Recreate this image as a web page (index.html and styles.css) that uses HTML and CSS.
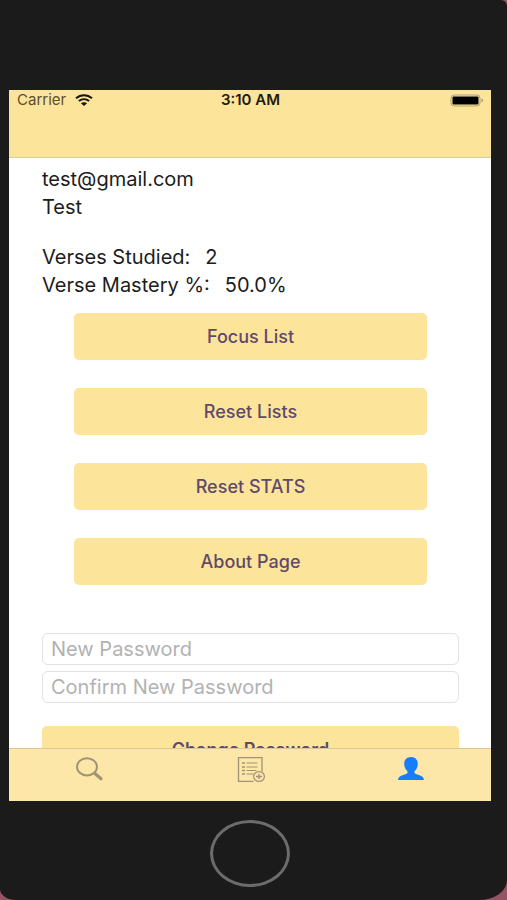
FILE: index.html
```html
<!DOCTYPE html>
<html lang="en">
<head>
<meta charset="utf-8">
<meta name="viewport" content="width=device-width, initial-scale=1">
<title>Profile</title>
<link rel="stylesheet" href="styles.css">
</head>
<body>
<div class="device">
  <div class="screen">
    <header class="topbar">
      <div class="status">
        <div class="carrier">
          <span>Carrier</span>
          <svg class="wifi" viewBox="0 0 18 12" aria-hidden="true">
            <path d="M1 4.3C5.6.1 12.4.1 17 4.3" />
            <path d="M3.9 7.1c3-2.6 7.2-2.6 10.2 0" />
            <path class="solid" d="M9 12 5.9 9.3c1.8-1.5 4.4-1.5 6.2 0z" />
          </svg>
        </div>
        <span class="time">3:10 AM</span>
        <svg class="battery" viewBox="0 0 34 13" aria-hidden="true">
          <rect class="shell" x="1" y="1" width="29" height="11" rx="3" />
          <rect x="2.500" y="2.500" width="26" height="8" rx="1" />
          <path class="cap" d="M31.500 4.500c2 .8 2 3.200 0 4z" />
        </svg>
      </div>
    </header>
    <main class="content">
      <div class="account">
        <p>test@gmail.com</p>
        <p>Test</p>
      </div>
      <dl class="stats">
        <div><dt>Verses Studied:</dt><dd>2</dd></div>
        <div><dt>Verse Mastery %:</dt><dd>50.0%</dd></div>
      </dl>
      <div class="actions">
        <button class="btn" type="button">Focus List</button>
        <button class="btn" type="button">Reset Lists</button>
        <button class="btn" type="button">Reset STATS</button>
        <button class="btn" type="button">About Page</button>
      </div>
      <form class="password">
        <input type="password" placeholder="New Password" aria-label="New Password" autocomplete="new-password">
        <input type="password" placeholder="Confirm New Password" aria-label="Confirm New Password" autocomplete="new-password">
        <button class="btn strong" type="button">Change Password</button>
      </form>
    </main>
    <nav class="tabs">
      <a href="#search" aria-label="Search">
        <svg class="icon" viewBox="0 0 30 26" aria-hidden="true">
          <ellipse cx="13" cy="10.800" rx="10" ry="8.600" stroke-width="2" />
          <path d="m19.500 16.500 2.500 2" stroke-width="2" />
          <path d="m21.500 18 5.500 4.700" stroke-width="3.200" stroke-linecap="round" />
        </svg>
      </a>
      <a href="#lists" aria-label="Lists">
        <svg class="icon" viewBox="0 0 30 26" aria-hidden="true">
          <path d="M18.500 25.300H3.500V1.700H27v14" stroke-width="1.300" />
          <path d="M7 7h3M7 11h3M7 14.500h3M7 18h3" stroke-width="1.500" />
          <path d="M11.500 7h11M11.500 11h11M11.500 14.500h10M11.500 18h7" stroke-width="1.200" />
          <ellipse cx="24" cy="20.500" rx="5.400" ry="4.900" stroke-width="1.200" />
          <path d="M21 20.500h6M24 18v5" stroke-width="1.300" />
        </svg>
      </a>
      <a class="active" href="#profile" aria-label="Profile" aria-current="page">
        <svg class="icon" viewBox="0 0 30 26" aria-hidden="true">
          <path d="M15 1c4.300 0 6.800 2.800 6.800 6.800 0 3-1 5.200-3 7.200-.5.500-.6 2 .2 2.500 4 2 8.500 2 9 6.500H2c.5-4.500 5-4.500 9-6.500.8-.5.700-2 .2-2.500-2-2-3-4.200-3-7.200C8.200 3.800 10.700 1 15 1z" />
        </svg>
      </a>
    </nav>
  </div>
  <div class="chin">
    <button class="home" type="button" aria-label="Home"></button>
  </div>
</div>
</body>
</html>
```
FILE: styles.css
```css
* {
  box-sizing: border-box;
}

body {
  margin: 0;
  background: #955363;
  color: #1c1c1c;
  font-family: Inter, "Liberation Sans", sans-serif;
  font-size: 20px;
  line-height: 28px;
}

p,
dl,
dd {
  margin: 0;
}

.device {
  display: flex;
  flex-direction: column;
  height: 100vh;
  padding: 90px 16px 0 9px;
  background: #1b1b1b;
  border-radius: 0 6px 28px 16px / 0 6px 20px 11px;
}

.screen {
  display: flex;
  flex: 1;
  flex-direction: column;
  min-height: 0;
  background: #fff;
}

.topbar {
  flex: none;
  height: 68px;
  background: #fde49b;
  border-bottom: 1px solid #d9cba0;
}

.status {
  display: grid;
  grid-template-columns: 1fr auto 1fr;
  align-items: center;
  padding: 0 7px 0 8px;
  font-size: 15px;
  line-height: 20px;
}

.carrier {
  display: flex;
  align-items: center;
  gap: 9px;
  color: #5c4f2c;
}

.wifi {
  width: 18px;
  height: 12px;
  fill: none;
  stroke: #17140a;
  stroke-width: 2;
}

.wifi .solid {
  fill: #17140a;
  stroke: none;
}

.time {
  color: #201b0c;
  font-weight: 600;
}

.battery {
  justify-self: end;
  width: 34px;
  height: 13px;
  fill: #000;
}

.battery .shell {
  fill: none;
  stroke: #b5a26b;
}

.battery .cap {
  fill: #a8955f;
}

.content {
  flex: 1;
  min-height: 0;
  padding: 7px 32px 0 33px;
  overflow: hidden;
}

.stats {
  margin-top: 22px;
}

.stats div {
  display: flex;
  gap: 15px;
}

.actions {
  display: grid;
  gap: 28px;
  margin: 14px 32px 48px;
}

.btn {
  height: 47px;
  padding: 0;
  border: 0;
  border-radius: 5px;
  background: #fde49b;
  color: #5f4a6c;
  font: inherit;
  font-weight: 500;
  font-size: 18px;
}

.password {
  display: grid;
  gap: 6px;
}

.password input {
  width: 100%;
  height: 32px;
  padding: 0 8px;
  border: 1px solid #e2e2e2;
  border-radius: 6px;
  background: #fff;
  color: inherit;
  font: inherit;
}

.password input::placeholder {
  color: #b2b2b2;
}

.password .btn {
  margin-top: 17px;
}

.password .strong {
  font-weight: 600;
}

.tabs {
  display: grid;
  flex: none;
  grid-template-columns: repeat(3, 1fr);
  height: 53px;
  background: #fce6a8;
  border-top: 1px solid #d8c797;
}

.tabs a {
  display: flex;
  justify-content: center;
  padding-top: 7px;
  color: #a19375;
}

.icon {
  width: 30px;
  height: 26px;
  fill: none;
  stroke: currentColor;
}

.tabs .active {
  color: #157efb;
}

.active .icon {
  fill: currentColor;
  stroke: none;
}

.chin {
  display: flex;
  flex: none;
  justify-content: center;
  height: 99px;
  padding-top: 19px;
}

.home {
  width: 80px;
  height: 67px;
  padding: 0;
  border: 3px solid #6c6c6c;
  border-radius: 50%;
  background: transparent;
}
```
